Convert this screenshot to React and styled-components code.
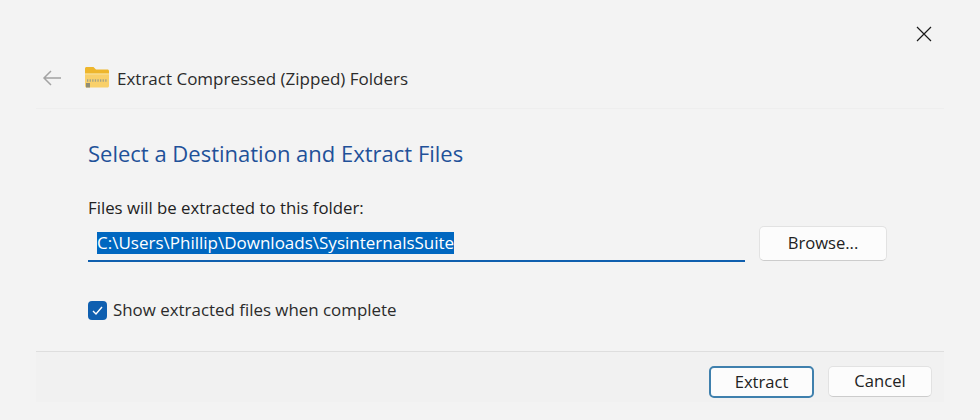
import React from "react";
import styled, { createGlobalStyle } from "styled-components";

const Global = createGlobalStyle`
  html, body { margin: 0; padding: 0; background: #f3f3f3; }
  body { font-family: "Open Sans", "Noto Sans", "Liberation Sans", sans-serif; }
`;

const Dialog = styled.div`
  width: 980px;
  height: 420px;
  box-sizing: border-box;
  background: #f3f3f3;
  display: flex;
  flex-direction: column;
  overflow: hidden;
`;

const TopBar = styled.div`
  height: 62px;
  display: flex;
  justify-content: flex-end;
  align-items: flex-start;
  padding: 25px 48px 0 0;
  box-sizing: border-box;
`;

const CloseButton = styled.div`
  width: 16px;
  height: 16px;
  color: #1a1a1a;
`;

const NavRow = styled.div`
  height: 47px;
  margin: 0 36px;
  padding: 0 0 14px 6px;
  box-sizing: border-box;
  display: flex;
  align-items: center;
  border-bottom: 1px solid #eeeeee;
`;

const BackArrow = styled.div`
  width: 20px;
  height: 16px;
  color: #a3a3a3;
  margin-right: 23px;
  display: flex;
`;

const FolderIcon = styled.div`
  width: 24px;
  height: 22px;
  margin-right: 8px;
`;

const Title = styled.div`
  font-size: 17px;
  line-height: 24px;
  margin-top: 1px;
  color: #2b2b2b;
  white-space: nowrap;
`;

const Body = styled.div`
  flex: 1;
  padding: 28px 0 0 88px;
  display: flex;
  flex-direction: column;
`;

const Heading = styled.h1`
  margin: 0;
  font-size: 22px;
  line-height: 32px;
  font-weight: 400;
  color: #1f5199;
`;

const Label = styled.div`
  margin-top: 28px;
  font-size: 16.8px;
  line-height: 22px;
  color: #222;
`;

const PathRow = styled.div`
  margin-top: 7px;
  display: flex;
  align-items: flex-start;
  gap: 14px;
`;

const PathField = styled.div`
  width: 657px;
  height: 36px;
  box-sizing: border-box;
  padding: 6px 0 0 9px;
  border-bottom: 2px solid #0f5fae;
  font-size: 17px;
  line-height: 22px;
`;

const Selected = styled.span`
  display: inline-block;
  background: #0067c0;
  color: #fff;
  height: 22px;
  white-space: nowrap;
`;

const Button = styled.div`
  box-sizing: border-box;
  display: flex;
  align-items: center;
  justify-content: center;
  width: ${(p) => p.$w}px;
  height: ${(p) => p.$h}px;
  padding-bottom: 2px;
  background: #fcfcfc;
  border: ${(p) => (p.$primary ? "2px solid #3f80ad" : "1px solid #e2e2e2")};
  border-bottom-color: ${(p) => (p.$primary ? "#3f80ad" : "#cccccc")};
  border-radius: 5px;
  font-size: 16.6px;
  color: #222;
`;

const CheckRow = styled.div`
  margin-top: 38px;
  display: flex;
  align-items: center;
  gap: 6px;
  font-size: 16.9px;
  line-height: 20px;
  color: #2b2b2b;
`;

const CheckBox = styled.div`
  width: 19px;
  height: 19px;
  border-radius: 4px;
  background: #0f5fb0;
  color: #fff;
  display: flex;
  align-items: center;
  justify-content: center;
`;

const Footer = styled.div`
  margin: 0 36px 18px;
  height: 51px;
  box-sizing: border-box;
  background: #f1f1f1;
  border-top: 1px solid #dedede;
  display: flex;
  justify-content: flex-end;
  align-items: flex-start;
  gap: 14px;
  padding: 14px 12px 0 0;
`;

export default function App() {
  return (
    <Dialog>
      <Global />
      <TopBar>
        <CloseButton>
          <svg width="16" height="16" viewBox="0 0 16 16" fill="none" stroke="currentColor" strokeWidth="1.2">
            <path d="M1 1l14 14M15 1L1 15" />
          </svg>
        </CloseButton>
      </TopBar>
      <NavRow>
        <BackArrow>
          <svg width="20" height="16" viewBox="0 0 20 16" fill="none" stroke="currentColor" strokeWidth="1.5">
            <path d="M19 8H2M9 1L2 8l7 7" />
          </svg>
        </BackArrow>
        <FolderIcon>
          <svg width="24" height="22" viewBox="0 0 24 22">
            <path d="M0 1.5C0 .7.7 0 1.5 0h7L11 2.5h11.5c.8 0 1.5.7 1.5 1.5v4H0z" fill="#eeb62c" />
            <path d="M0 6.5h24V19c0 .8-.7 1.5-1.5 1.5h-21C.7 20.5 0 19.8 0 19z" fill="#f9d06a" />
            <path d="M0 7h24" stroke="#f7e2a2" strokeWidth="1" />
            <path d="M2 13.5h20" stroke="#a3a286" strokeWidth="2.5" strokeDasharray="1.3 1.3" />
            <rect x="1" y="16" width="4" height="4.5" fill="#8f8d76" />
          </svg>
        </FolderIcon>
        <Title>Extract Compressed (Zipped) Folders</Title>
      </NavRow>
      <Body>
        <Heading>Select a Destination and Extract Files</Heading>
        <Label>Files will be extracted to this folder:</Label>
        <PathRow>
          <PathField>
            <Selected>C:\Users\Phillip\Downloads\SysinternalsSuite</Selected>
          </PathField>
          <Button $w={128} $h={35}>Browse...</Button>
        </PathRow>
        <CheckRow>
          <CheckBox>
            <svg width="13" height="13" viewBox="0 0 13 13" fill="none" stroke="currentColor" strokeWidth="1.4">
              <path d="M2 7l3 3 6-7" />
            </svg>
          </CheckBox>
          Show extracted files when complete
        </CheckRow>
      </Body>
      <Footer>
        <Button $w={105} $h={32} $primary>Extract</Button>
        <Button $w={104} $h={31}>Cancel</Button>
      </Footer>
    </Dialog>
  );
}
